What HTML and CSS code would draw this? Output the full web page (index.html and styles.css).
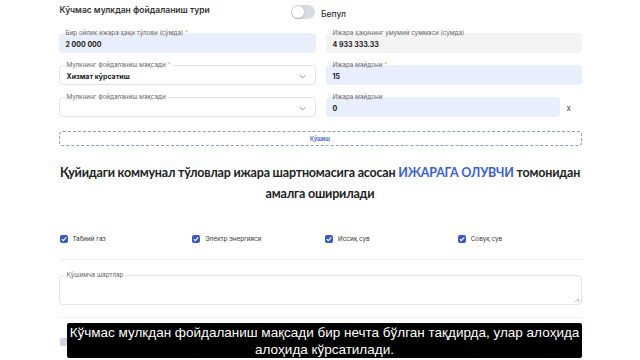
FILE: index.html
```html
<!DOCTYPE html>
<html lang="uz">
<head>
    <meta charset="UTF-8">
    <meta name="viewport" content="width=device-width, initial-scale=1.0">
    <title>Ижара шартномаси</title>
    <link rel="stylesheet" href="styles.css">
</head>
<body>
    <div class="page">
        <div class="type-row">
            <div class="type-left">
                <span class="type-title">Кўчмас мулкдан фойдаланиш тури</span>
                <span class="switch"><span class="knob"></span></span>
            </div>
            <span class="switch-label">Бепул</span>
        </div>

        <div class="fields">
            <div class="field filled">
                <label>Бир ойлик ижара ҳақи тўлови (сўмда) <i>*</i></label>
                <div class="value">2 000 000</div>
            </div>
            <div class="field readonly">
                <label>Ижара ҳақининг умумий суммаси (сўмда)</label>
                <div class="value">4 933 333.33</div>
            </div>

            <div class="field outlined">
                <label>Мулкнинг фойдаланиш мақсади <i>*</i></label>
                <div class="value">Хизмат кўрсатиш</div>
                <svg class="chevron" viewBox="0 0 10 6" width="7" height="5"><path d="M1 1l4 4 4-4" fill="none" stroke="#777" stroke-width="1.2"/></svg>
            </div>
            <div class="field filled">
                <label>Ижара майдони <i>*</i></label>
                <div class="value">15</div>
            </div>

            <div class="field outlined">
                <label>Мулкнинг фойдаланиш мақсади</label>
                <div class="value"></div>
                <svg class="chevron" viewBox="0 0 10 6" width="7" height="5"><path d="M1 1l4 4 4-4" fill="none" stroke="#777" stroke-width="1.2"/></svg>
            </div>
            <div class="field-with-remove">
                <div class="field filled">
                    <label>Ижара майдони</label>
                    <div class="value">0</div>
                </div>
                <span class="remove">x</span>
            </div>
        </div>

        <button class="add-btn">Қўшиш</button>

        <h2 class="notice">Қуйидаги коммунал тўловлар ижара шартномасига асосан <span class="accent">ИЖАРАГА ОЛУВЧИ</span> томонидан амалга оширилади</h2>

        <div class="utilities">
            <label class="check"><span class="box"></span>Табиий газ</label>
            <label class="check"><span class="box"></span>Электр энергияси</label>
            <label class="check"><span class="box"></span>Иссиқ сув</label>
            <label class="check"><span class="box"></span>Совуқ сув</label>
        </div>

        <div class="field outlined textarea">
            <label>Қўшимча шартлар</label>
            <span class="grip"></span>
        </div>

        <div class="bottom-row">
            <span class="box disabled"></span>
        </div>
    </div>

    <div class="subtitle">Кўчмас мулкдан фойдаланиш мақсади бир нечта бўлган тақдирда, улар алоҳида<br>алоҳида кўрсатилади.</div>
</body>
</html>
```

FILE: styles.css
```css
body {
    margin: 0;
    font-family: 'Inter', 'Noto Sans', sans-serif;
    background: #ffffff;
    color: #222;
    overflow: hidden;
}

.page {
    width: 523px;
    margin: 0 auto;
    padding-top: 3px;
}

.type-row {
    display: grid;
    grid-template-columns: 1fr 1fr;
    gap: 10px;
    height: 18px;
    align-items: center;
}

.type-left {
    display: flex;
    justify-content: space-between;
    align-items: center;
}

.type-title {
    font-size: 8.5px;
    font-weight: 600;
    color: #333;
    padding-left: 1px;
    margin-top: -4px;
}

.switch {
    width: 24px;
    height: 14px;
    border-radius: 7px;
    background: #d9dbe3;
    display: flex;
    align-items: center;
    padding-left: 1px;
    box-sizing: border-box;
}

.knob {
    width: 12px;
    height: 12px;
    border-radius: 50%;
    background: #fff;
    box-shadow: 0 1px 2px rgba(0, 0, 0, 0.2);
}

.switch-label {
    font-size: 8.5px;
    font-weight: 500;
    color: #333;
    margin-left: -4px;
    margin-top: 3px;
}

.fields {
    display: grid;
    grid-template-columns: 257px 256px;
    column-gap: 10px;
    row-gap: 12px;
    margin-top: 12px;
}

.field {
    position: relative;
    height: 20px;
    border-radius: 4px;
    box-sizing: border-box;
    display: flex;
    align-items: center;
    padding: 3px 7px 0;
}

.field label {
    position: absolute;
    top: -4px;
    left: 5px;
    font-size: 6.3px;
    color: #666;
    padding: 0 2px;
    line-height: 8px;
}

.field label i {
    font-style: normal;
    color: #f0a64a;
}

.field.filled {
    background: #e8eefc;
}

.field.readonly {
    background: #f3f3f4;
}

.field.outlined {
    border: 1px solid #e4e4e8;
    background: #fff;
}

.field.outlined label {
    background: #fff;
    top: -5px;
}

.value {
    flex: 1;
    font-size: 7px;
    font-weight: 700;
    color: #222;
}

.chevron {
    margin-right: 2px;
}

.field-with-remove {
    display: flex;
    align-items: center;
}

.field-with-remove .field {
    width: 234px;
}

.remove {
    margin-left: 7px;
    font-size: 8px;
    color: #444;
    margin-top: 2px;
}

.add-btn {
    display: block;
    width: 100%;
    height: 15px;
    margin-top: 14px;
    border: 1px dashed #8a9bc7;
    border-radius: 4px;
    background: #fff;
    color: #3d63c9;
    font-family: inherit;
    font-size: 5.5px;
    font-weight: 600;
    padding: 0;
}

.notice {
    margin: 16px 0 0;
    font-family: 'Lato', 'Noto Sans', sans-serif;
    font-size: 12.5px;
    font-weight: 700;
    letter-spacing: -0.2px;
    line-height: 21px;
    text-align: center;
    color: #222;
}

.accent {
    color: #3a5fd6;
}

.utilities {
    display: grid;
    grid-template-columns: repeat(4, 1fr);
    gap: 10px;
    margin-top: 31px;
    padding: 0 1px 16px;
    border-bottom: 1px solid #f0f0f2;
}

.check {
    display: flex;
    align-items: center;
    gap: 5px;
    font-size: 6.3px;
    color: #333;
}

.box {
    width: 8px;
    height: 8px;
    border-radius: 2px;
    background: #3658c9 url("data:image/svg+xml;utf8,<svg xmlns='http://www.w3.org/2000/svg' viewBox='0 0 8 8'><path d='M1.8 4.1l1.5 1.5 3-3.2' fill='none' stroke='white' stroke-width='1.2'/></svg>") center / 8px 8px no-repeat;
}

.field.textarea {
    height: 30px;
    margin-top: 15px;
}

.grip {
    position: absolute;
    right: 2px;
    bottom: 2px;
    width: 4px;
    height: 4px;
    background: linear-gradient(135deg, transparent 45%, #bbb 45%, #bbb 55%, transparent 55%, transparent 75%, #bbb 75%);
}

.bottom-row {
    margin-top: 12px;
    padding-top: 20px;
    border-top: 1px solid #f0f0f2;
    padding-left: 1px;
}

.box.disabled {
    display: block;
    background: #cfd5e6;
}

.subtitle {
    position: fixed;
    left: 67px;
    bottom: 2px;
    width: 515px;
    height: 35px;
    background: #000;
    color: #fff;
    font-family: 'Liberation Sans', Arial, sans-serif;
    font-size: 13.5px;
    line-height: 17px;
    text-align: center;
    white-space: nowrap;
    padding-top: 1px;
    box-sizing: border-box;
    border-radius: 2px;
}
```
